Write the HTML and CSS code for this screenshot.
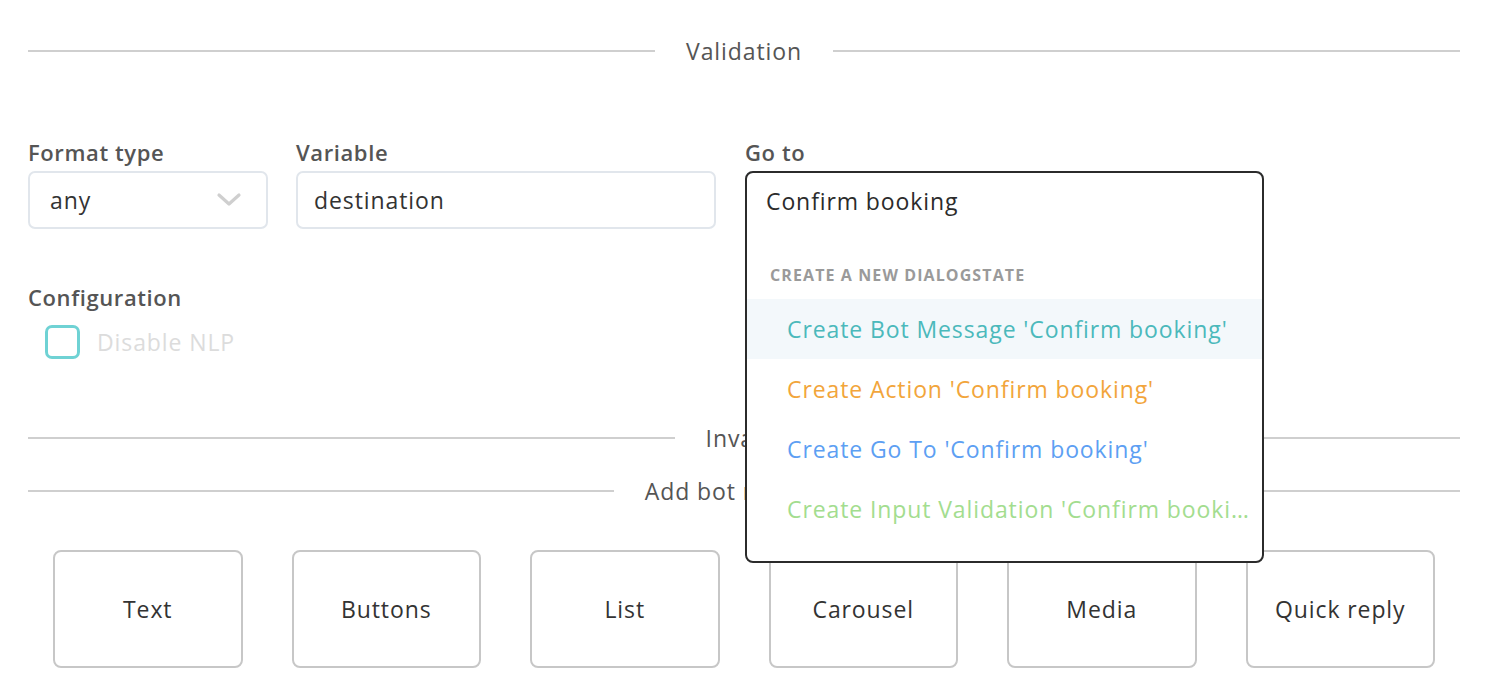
FILE: index.html
```html
<!DOCTYPE html>
<html lang="en">
<head>
<meta charset="utf-8">
<title>Validation</title>
<link rel="stylesheet" href="styles.css">
</head>
<body>
<div class="page">
  <div class="divider divider-top">
    <span class="line"></span><span class="divider-text">Validation</span><span class="line"></span>
  </div>

  <div class="form-row">
    <div class="field field-format">
      <label class="label">Format type</label>
      <div class="select">
        <span class="value">any</span>
        <svg class="chevron" width="26" height="16" viewBox="0 0 26 16"><polyline points="3,3 13,12 23,3" fill="none" stroke="#cfcfcf" stroke-width="3.2" stroke-linecap="round" stroke-linejoin="round"/></svg>
      </div>
    </div>
    <div class="field field-variable">
      <label class="label">Variable</label>
      <div class="input"><span class="value">destination</span></div>
    </div>
    <div class="field field-goto">
      <label class="label">Go to</label>
      <div class="goto-wrap">
        <div class="input input-goto"></div>
        <div class="dropdown">
          <div class="dropdown-input">Confirm booking</div>
          <div class="dropdown-header">Create a new dialogstate</div>
          <div class="option option-active opt-teal">Create Bot Message 'Confirm booking'</div>
          <div class="option opt-orange">Create Action 'Confirm booking'</div>
          <div class="option opt-blue">Create Go To 'Confirm booking'</div>
          <div class="option opt-green">Create Input Validation 'Confirm booking'</div>
        </div>
      </div>
    </div>
  </div>

  <div class="config">
    <label class="label">Configuration</label>
    <div class="checkbox-row">
      <span class="checkbox"></span>
      <span class="checkbox-label">Disable NLP</span>
    </div>
  </div>

  <div class="divider divider-invalid">
    <span class="line"></span><span class="divider-text">Invalid</span><span class="line"></span>
  </div>
  <div class="divider divider-add">
    <span class="line"></span><span class="divider-text">Add bot message</span><span class="line"></span>
  </div>

  <div class="buttons">
    <div class="btn">Text</div>
    <div class="btn">Buttons</div>
    <div class="btn">List</div>
    <div class="btn">Carousel</div>
    <div class="btn">Media</div>
    <div class="btn">Quick reply</div>
  </div>
</div>
</body>
</html>
```

FILE: styles.css
```css
* { box-sizing: border-box; }
html, body { margin: 0; padding: 0; background: #fff; }
body {
  font-family: "Open Sans", "Liberation Sans", sans-serif;
  font-size: 23px;
  letter-spacing: 0.9px;
  color: #333;
  width: 1492px;
  height: 700px;
  overflow: hidden;
}
.page {
  padding: 0 32px 0 28px;
}
.divider {
  display: flex;
  align-items: center;
  height: 30px;
}
.divider .line {
  flex: 1;
  height: 2px;
  background: #cfcfcf;
}
.divider-text {
  padding: 0 31px;
  font-size: 23px;
  color: #555;
  white-space: nowrap;
}
.divider-top { margin-top: 36px; }

.form-row {
  display: flex;
  margin-top: 73px;
}
.field { display: flex; flex-direction: column; }
.field-format { width: 240px; }
.field-variable { width: 420px; margin-left: 28px; }
.field-goto { width: 519px; margin-left: 29px; }
.label {
  font-size: 22px;
  font-weight: 600;
  letter-spacing: 0.6px;
  color: #555;
  line-height: 26px;
  height: 26px;
  margin-bottom: 6px;
}
.select, .input {
  height: 58px;
  border: 2px solid #e1e6ec;
  border-radius: 7px;
  display: flex;
  align-items: center;
  color: #333;
}
.select { padding: 0 24px 0 20px; justify-content: space-between; }
.input { padding: 0 16px; }
.chevron { display: block; }

.goto-wrap { position: relative; }
.dropdown {
  position: absolute;
  top: 0;
  left: 0;
  width: 519px;
  height: 392px;
  background: #fff;
  border: 2px solid #2b2b2b;
  border-radius: 8px;
  z-index: 5;
}
.dropdown-input {
  height: 56px;
  padding-left: 19px;
  display: flex;
  align-items: center;
  color: #2b2b2b;
}
.dropdown-header {
  margin-top: 33px;
  padding-left: 23px;
  height: 37px;
  font-size: 16px;
  font-weight: 700;
  letter-spacing: 1.1px;
  text-transform: uppercase;
  color: #9a9a9a;
  line-height: 26px;
}
.option {
  height: 60px;
  line-height: 60px;
  padding: 0 4px 0 40px;
  white-space: nowrap;
  overflow: hidden;
  text-overflow: ellipsis;
}
.option-active { background: #f3f8fb; }
.opt-teal { color: #4bb9bb; }
.opt-orange { color: #f2a53b; }
.opt-blue { color: #5d9ff3; }
.opt-green { color: #a3dd8f; }

.config { margin-top: 55px; display: flex; flex-direction: column; }
.config .label { margin-bottom: 15px; }
.checkbox-row { display: flex; align-items: center; padding-left: 17px; }
.checkbox {
  width: 35px;
  height: 34px;
  border: 3px solid #6fd2d4;
  border-radius: 7px;
}
.checkbox-label {
  margin-left: 17px;
  color: #dcdcdc;
}

.divider-invalid { margin-top: 64px; }
.divider-add { margin-top: 23px; }

.buttons {
  display: grid;
  grid-template-columns: repeat(6, 1fr);
  column-gap: 49px;
  padding: 0 25px;
  margin-top: 44px;
}
.btn {
  height: 118px;
  border: 2px solid #c7c7c7;
  border-radius: 8px;
  display: flex;
  align-items: center;
  justify-content: center;
  color: #333;
}
```
